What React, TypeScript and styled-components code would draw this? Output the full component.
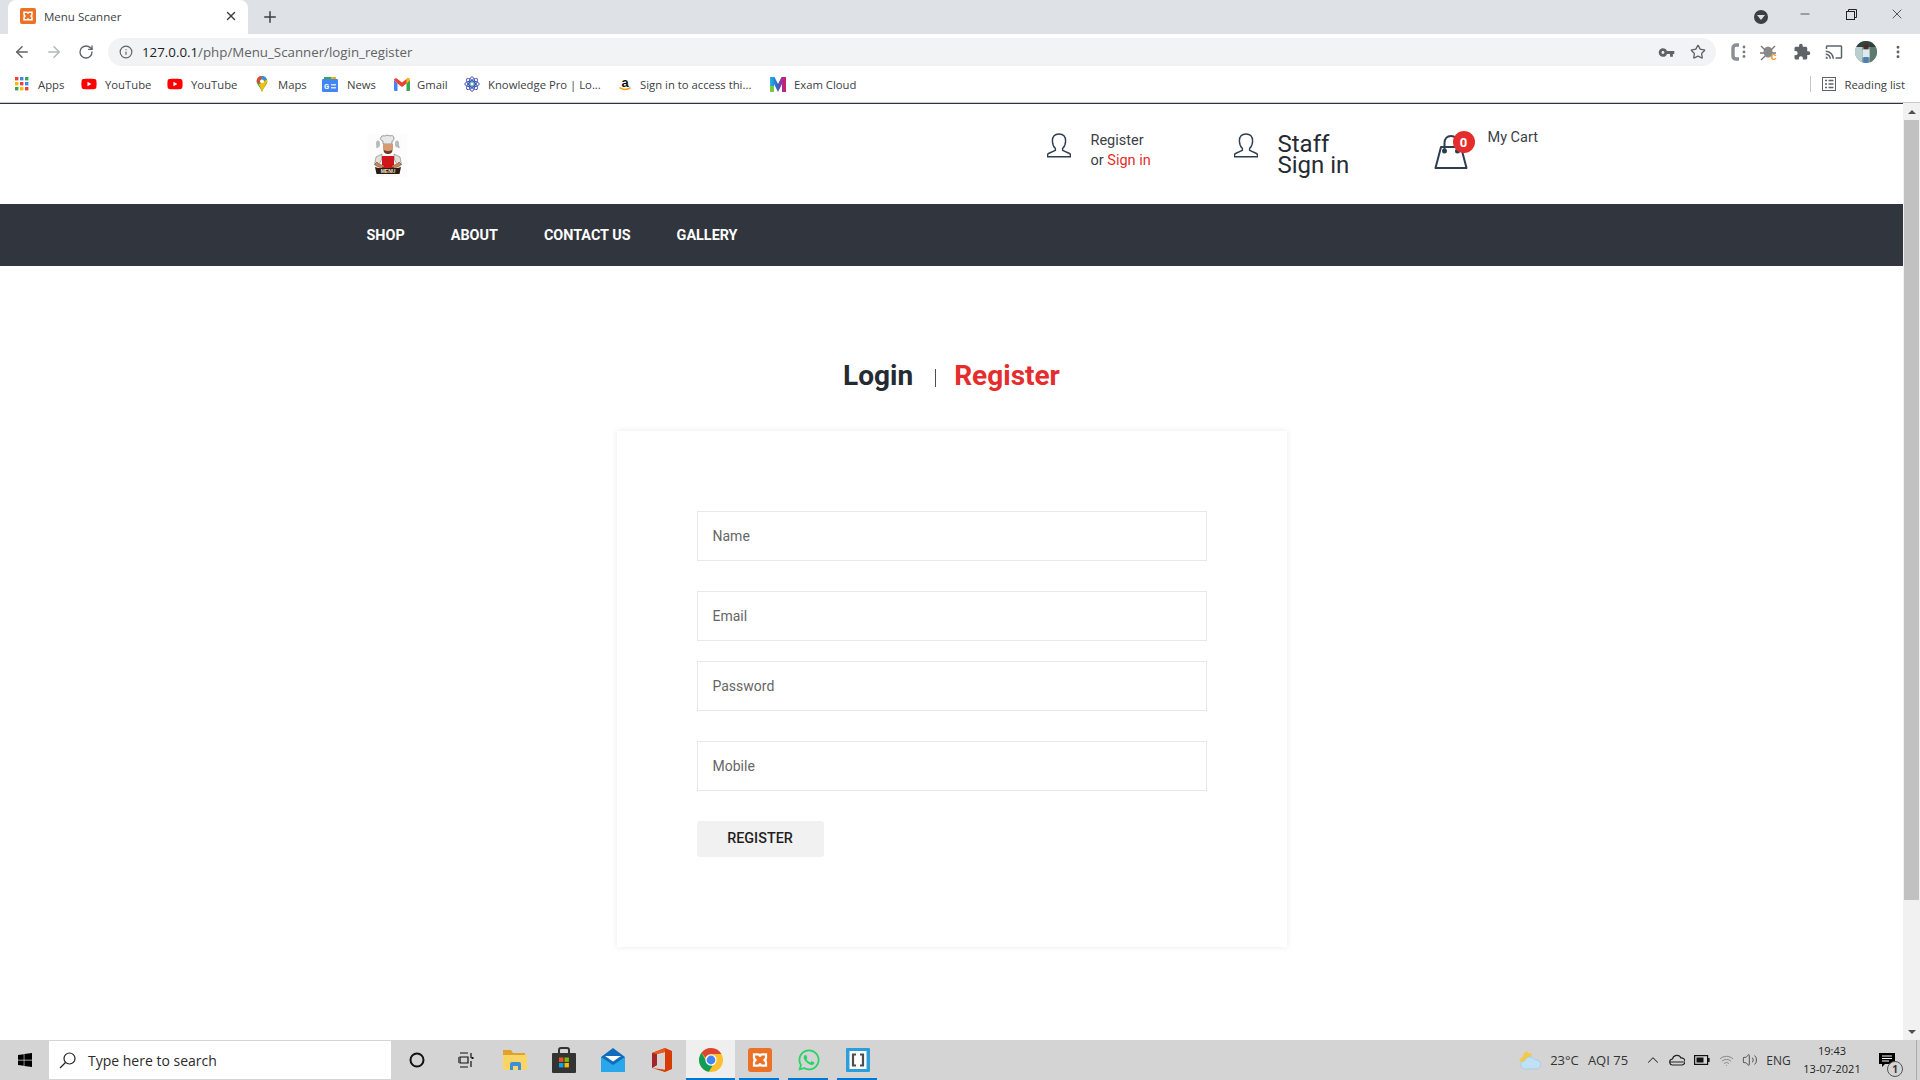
import React from 'react';
import styled, { createGlobalStyle } from 'styled-components';
import { ArrowLeft, ArrowRight, RotateCw, Info, Star, X, Plus, Minus, ChevronUp, Volume2, Wifi, EllipsisVertical } from 'lucide-react';
import { FaWindows, FaWhatsapp, FaYoutube } from 'react-icons/fa';
import { MdExtension, MdVpnKey, MdCast } from 'react-icons/md';

const Global = createGlobalStyle`
  html, body { margin: 0; padding: 0; height: 100%; overflow: hidden; background: #fff; }
  * { box-sizing: border-box; }
  #root { height: 100%; }
`;

const UI = `"Open Sans", "Noto Sans", sans-serif`;
const WEB = `Roboto, "Liberation Sans", sans-serif`;

const Screen = styled.div`display: flex; flex-direction: column; height: 1080px; width: 1920px;`;

/* ---------- browser chrome ---------- */
const Chrome = styled.header`flex: 0 0 103px; display: flex; flex-direction: column; border-bottom: 1px solid #c8cacd; font-family: ${UI}; color: #3c4043;`;
const TabStrip = styled.div`flex: 0 0 34px; display: flex; align-items: center; padding-left: 8px; background: #dee1e6;`;
const Tab = styled.div`width: 240px; height: 34px; display: flex; align-items: center; padding: 0 10px 2px 12px; background: #fff; border-radius: 8px 8px 0 0; font-size: 11.5px;`;
const TabTitle = styled.span`margin-left: 8px; flex: 1;`;
const NewTab = styled.div`margin-left: 13px; display: flex; color: #3c4043;`;
const WindowControls = styled.div`margin-left: auto; display: flex; align-items: center; height: 34px;`;
const Dropdown = styled.div`width: 14px; height: 14px; border-radius: 50%; background: #3c4043; margin-right: 4px; display: flex; align-items: center; justify-content: center;
  &::after { content: ''; border: 4px solid transparent; border-top: 5px solid #dee1e6; border-bottom: 0; }`;
const DropSlot = styled.div`width: 38px; display: flex; justify-content: center;`;
const WinButton = styled.div`width: 46px; height: 28px; align-self: flex-start; display: flex; align-items: center; justify-content: center; color: #222;`;

const Toolbar = styled.div`flex: 0 0 36px; display: flex; align-items: center; padding: 0 6px; background: #fff;`;
const ToolSlot = styled.div<{ $muted?: boolean }>`width: 32px; height: 28px; flex: none; display: flex; align-items: center; justify-content: center; color: ${p => (p.$muted ? '#b4b6b9' : '#5f6368')};`;
const Omnibox = styled.div`flex: 1; height: 28px; margin: 0 6px; padding: 0 2px; border-radius: 14px; background: #f1f3f4; display: flex; align-items: center;`;
const UrlText = styled.span`font-size: 13.3px; color: #5f6368; white-space: nowrap;`;
const UrlHost = styled.span`color: #202124;`;
const OmniSpacer = styled.div`flex: 1;`;
const Avatar = styled.div`width: 22px; height: 22px; border-radius: 50%; overflow: hidden; display: flex;`;

const Bookmarks = styled.div`flex: 0 0 32px; display: flex; align-items: center; padding: 0 0 4px 15px; background: #fff; font-size: 11.3px;`;
const Bookmark = styled.div<{ $w: number }>`width: ${p => p.$w}px; flex: none; display: flex; align-items: center; white-space: nowrap; overflow: hidden;`;
const BmIcon = styled.span<{ $gap: number }>`display: flex; margin-right: ${p => p.$gap}px; flex: none;`;
const Reading = styled.div`margin-left: auto; display: flex; align-items: center; padding-right: 15px; height: 16px; border-left: 1px solid #c4c6c9; padding-left: 11px; gap: 9px; white-space: nowrap;`;

/* ---------- page ---------- */
const Viewport = styled.div`flex: 1; display: flex; min-height: 0;`;
const Page = styled.main`flex: 1; min-width: 0; overflow: hidden; background: #fff; font-family: ${WEB}; color: #262b33; border-top: 1px solid #31353d;`;
const Scrollbar = styled.div`flex: 0 0 17px; background: #f1f1f1; display: flex; flex-direction: column; align-items: center;`;
const Thumb = styled.div`width: 15px; height: 780px; margin: 0 0 auto; background: #c1c1c1;`;
const Arrow = styled.div<{ $up?: boolean }>`height: 17px; flex: none; display: flex; align-items: center; justify-content: center;
  &::after { content: ''; border: 4px solid transparent; ${p => (p.$up ? 'border-bottom: 4px solid #505050; border-top: 0;' : 'border-top: 4px solid #505050; border-bottom: 0;')} }`;

const SiteHeader = styled.div`height: 100px; width: 1170px; margin: 0 auto; display: flex; align-items: flex-start;`;
const Logo = styled.div`width: 40px; margin-top: 30px; flex: none; display: flex;`;
const Account = styled.div<{ $w: number; $ml?: number }>`width: ${p => p.$w}px; margin-left: ${p => p.$ml ?? 0}px; flex: none; display: flex; align-items: flex-start;`;
const UserGlyph = styled.span`display: flex; margin-top: 29px; color: #2c3e50;`;
const AccountText = styled.div`margin: 27px 0 0 20px; font-size: 14.5px; line-height: 20px; color: #3a3f47; white-space: nowrap;`;
const Red = styled.span`color: #e52d2d;`;
const StaffText = styled.div`margin: 30px 0 0 20px; font-size: 24px; line-height: 21px; color: #262b33; white-space: nowrap;`;
const Cart = styled.div`display: flex; align-items: flex-start; position: relative; margin-left: -1px;`;
const CartGlyph = styled.span`display: flex; margin-top: 30px; color: #2c3e50;`;
const CartBadge = styled.span`position: absolute; left: 19px; top: 27px; width: 22px; height: 22px; border-radius: 50%; background: #e52d2d; color: #fff; font-size: 13px; font-weight: 700; display: flex; align-items: center; justify-content: center;`;
const CartLabel = styled.span`margin: 24px 0 0 20px; font-size: 14.5px; line-height: 20px; color: #3a3f47; white-space: nowrap;`;

const NavBar = styled.nav`height: 62px; background: #31353d;`;
const NavList = styled.div`width: 1170px; height: 100%; margin: 0 auto; display: flex; align-items: center; gap: 46px; color: #fff; font-size: 14.4px; font-weight: 700;`;

const Section = styled.section`padding-top: 92px; display: flex; flex-direction: column; align-items: center;`;
const Heading = styled.div`height: 36px; display: flex; align-items: center; font-size: 28px; font-weight: 700; margin-bottom: 37px; line-height: 36px;`;
const Divider = styled.span`width: 1px; height: 18px; margin: 4px 18px 0 22px; background: #4a4d52;`;
const Card = styled.form`width: 670px; padding: 80px 80px 90px; background: #fff; box-shadow: 0 0 6px rgba(0, 0, 0, 0.09); display: flex; flex-direction: column; align-items: flex-start;`;
const Field = styled.input<{ $after: number }>`width: 510px; height: 50px; margin-bottom: ${p => p.$after}px; padding: 0 15px; border: 1px solid #e8e8e8; outline: none; background: #fff; font-family: ${WEB}; font-size: 14px;
  &::placeholder { color: #666; opacity: 1; }`;
const Submit = styled.button`width: 127px; height: 36px; border: 0; border-radius: 3px; background: #f1f1f1; color: #1f1f1f; font-family: ${WEB}; font-size: 14.4px; font-weight: 500; padding: 0 0 2px;`;

/* ---------- taskbar ---------- */
const Taskbar = styled.footer`flex: 0 0 40px; display: flex; align-items: stretch; background: #d4d4d4; font-family: ${UI}; color: #222; position: relative;
  &::after { content: ''; position: absolute; right: 3px; top: 0; bottom: 0; width: 1px; background: #aaa; }`;
const StartSlot = styled.div`width: 49px; display: flex; align-items: center; justify-content: center; color: #000;`;
const SearchBox = styled.div`width: 342px; margin: 1px 0; background: #fff; display: flex; align-items: center; padding-left: 10px; gap: 12px; font-size: 14px; color: #2b2b2b;`;
const AppList = styled.div`display: flex; margin-left: 1px;`;
const AppSlot = styled.div<{ $active?: boolean; $open?: boolean }>`width: 49px; display: flex; align-items: center; justify-content: center; position: relative; background: ${p => (p.$active ? '#efefef' : 'transparent')};
  &::after { content: ''; display: ${p => (p.$active || p.$open ? 'block' : 'none')}; position: absolute; bottom: 0; height: 2px; left: ${p => (p.$active ? 0 : 4)}px; right: ${p => (p.$active ? 0 : 5)}px; background: #0078d4; }`;
const Tray = styled.div`margin-left: auto; display: flex; align-items: center; padding-right: 14px; font-size: 12px;`;
const TraySlot = styled.div<{ $w: number; $ml?: number; $big?: boolean }>`width: ${p => p.$w}px; margin-left: ${p => p.$ml ?? 0}px; flex: none; display: flex; align-items: center; justify-content: center; white-space: nowrap; color: #333; font-size: ${p => (p.$big ? 13 : 12)}px;`;
const Clock = styled.div`width: 72px; display: flex; flex-direction: column; align-items: center; font-size: 11px; line-height: 18px; color: #222;`;
const Notify = styled.div`width: 38px; display: flex; justify-content: center; position: relative;`;
const NotifyBadge = styled.span`position: absolute; left: 19px; top: 8px; width: 16px; height: 16px; border: 1px solid #555; border-radius: 50%; background: #d4d4d4; font-size: 10px; font-weight: 700; display: flex; align-items: center; justify-content: center; color: #333;`;

/* ---------- drawings ---------- */
const Xampp = ({ s = 16 }: { s?: number }) => (
  <svg width={s} height={s} viewBox="0 0 16 16">
    <rect width="16" height="16" rx="2" fill="#ea7125" />
    <path d="M4 4.2h2.6c1 0 1.4.9 1.4 1.6 0-.7.4-1.6 1.4-1.6H12v2.2c0 1-.9 1.6-1.7 1.6.8 0 1.7.6 1.700 1.600v2.200H9.400C8.400 11.800 8 10.900 8 10.200c0 .7-.4 1.600-1.400 1.600H4V9.600C4 8.600 4.900 8 5.700 8 4.900 8 4 7.400 4 6.400z" fill="none" stroke="#fff" strokeWidth="1.500" />
  </svg>
);
const AppsGrid = () => (
  <svg width="14" height="14" viewBox="0 0 14 14">
    {[0, 5, 10].flatMap((y, r) => [0, 5, 10].map((x, c) => (
      <rect key={`${r}${c}`} x={x} y={y} width="3.4" height="3.4" fill={[['#ea4335', '#4285f4', '#34a853'], ['#fbbc05', '#ea4335', '#4285f4'], ['#34a853', '#fbbc05', '#ea4335']][r][c]} />
    )))}
  </svg>
);
const MapsPin = () => (
  <svg width="14" height="16" viewBox="0 0 14 18">
    <path d="M7 0a6 6 0 0 1 6 6c0 4-4 6-6 12C5 12 1 10 1 6a6 6 0 0 1 6-6z" fill="#34a853" />
    <path d="M2 2.2A6 6 0 0 1 7 0L3 9C1.5 7.5 1 7 1 6a6 6 0 0 1 1-3.8z" fill="#ea4335" />
    <path d="M7 0a6 6 0 0 1 5 2.6L7 8z" fill="#4285f4" />
    <path d="M3.4 9.6 12.6 4c.9 2.4-.4 4.4-2 6.4L7 18C6 14 4.8 12 3.4 9.6z" fill="#fbbc05" />
    <circle cx="7" cy="6" r="2.2" fill="#fff" />
  </svg>
);
const NewsIcon = () => (
  <svg width="16" height="16" viewBox="0 0 16 16">
    <path d="M2 1h12v4H2z" fill="#f9ab00" /><path d="M2 1h7v3H2z" fill="#34a853" />
    <rect y="3" width="16" height="13" rx="1" fill="#4285f4" />
    <text x="2" y="12.5" fontSize="7.5" fontWeight="700" fontFamily="Roboto" fill="#fff">G</text>
    <path d="M9 8h5v1.4H9zM9 11h5v1.4H9z" fill="#d2e3fc" />
  </svg>
);
const GmailIcon = () => (
  <svg width="16" height="13" viewBox="0 0 16 13">
    <path d="M0 2v10a1 1 0 0 0 1 1h2.5V5.5z" fill="#4285f4" /><path d="M16 2v10a1 1 0 0 1-1 1h-2.5V5.5z" fill="#34a853" />
    <path d="M0 2C0 .5 1.6-.4 2.8.5L8 4.4l5.2-3.9C14.4-.4 16 .5 16 2l-3.5 3.5L8 9 3.5 5.5z" fill="#ea4335" />
    <path d="M12.5 5.5 16 2c0-1.5-1.6-2.4-2.8-1.5L12.5 1z" fill="#fbbc05" />
  </svg>
);
const KnowledgeIcon = () => (
  <svg width="16" height="16" viewBox="0 0 16 16" fill="none" stroke="#3f51b5" strokeWidth="1">
    {[0, 45, 90, 135].map(a => <ellipse key={a} cx="8" cy="8" rx="3" ry="7.2" transform={`rotate(${a} 8 8)`} />)}
    <circle cx="8" cy="8" r="2" stroke="#2aa7a0" />
  </svg>
);
const AmazonIcon = () => (
  <svg width="16" height="16" viewBox="0 0 16 16">
    <text x="8" y="10.5" textAnchor="middle" fontSize="13" fontWeight="700" fontFamily="Liberation Sans" fill="#111">a</text>
    <path d="M2.5 11.5c3 2.5 8 2.5 11 .2" stroke="#f90" strokeWidth="1.5" fill="none" />
  </svg>
);
const ExamCloud = () => (
  <svg width="16" height="16" viewBox="0 0 16 16">
    <defs><linearGradient id="ec" x1="0" x2="1" y1="0" y2="0"><stop offset="0" stopColor="#2bb0e8" /><stop offset=".45" stopColor="#1e6fc4" /><stop offset=".6" stopColor="#7b3fb5" /><stop offset="1" stopColor="#d81b60" /></linearGradient></defs>
    <path d="M0 1h4.5L8 8l3.5-7H16v15h-4V8l-4 8-4-8v8H0z" fill="url(#ec)" />
    <path d="M0 10h4v6H0z" fill="#7cc644" />
  </svg>
);
const UserOutline = () => (
  <svg width="24" height="25" viewBox="0 0 24 25" fill="none" stroke="currentColor" strokeWidth="1.4">
    <path d="M8.4 15.5c-2-2-3-4.6-3-7.6C5.4 3.6 8 1 12 1s6.600 2.600 6.600 6.900c0 3-1 5.600-3 7.600v1.800l6.900 3.200c.8.400 1 1 1 1.900v1.400H.5v-1.400c0-.9.2-1.500 1-1.900l6.900-3.200z" />
  </svg>
);
const BagOutline = () => (
  <svg width="34" height="35" viewBox="0 0 34 35" fill="none" stroke="currentColor" strokeWidth="2">
    <path d="M7 13h20l5.500 21H1.500z" strokeLinejoin="round" />
    <path d="M10.500 16V9c0-4 2.500-7 6.500-7s6.500 3 6.500 7v7" />
    <circle cx="10.500" cy="17" r="1.500" fill="currentColor" /><circle cx="23.500" cy="17" r="1.500" fill="currentColor" />
  </svg>
);
const ChefLogo = () => (
  <svg width="40" height="43" viewBox="0 0 40 43">
    <rect width="40" height="43" fill="#fcfcfc" />
    <path d="M14 3c1-2 3-1 4-1 1-1 4-1 5 0 2-1 4 0 4 2 0 2-1 3-2 3v3H16V7c-2 0-3-2-2-4z" fill="#e8e8e8" stroke="#777" strokeWidth=".7" />
    <path d="M16 10h10v5c0 3-2 5-5 5s-5-2-5-5z" fill="#d89a75" />
    <path d="M17 16c2 1.500 6 1.500 8 0v2c-2 2.500-6 2.500-8 0z" fill="#6a3a22" />
    <path d="M11 8l-1 6M31 8l1 6" stroke="#888" strokeWidth="1" />
    <ellipse cx="11" cy="10" rx="2" ry="3.400" fill="#b8bcc0" /><ellipse cx="30" cy="10" rx="2" ry="3.400" fill="#b8bcc0" />
    <path d="M15 20l-6 3-1.500 8h4l3-5zM27 20l6 3 1.500 8h-4l-3-5z" fill="#e3e0d9" stroke="#666" strokeWidth=".5" />
    <path d="M15 22h12v12H15z" fill="#d0161b" />
    <path d="M8 30c1 3 5 4 9 3v-2c-3 0-6-.5-7-3zM34 30c-1 3-5 4-9 3v-2c3 0 6-.5 7-3z" fill="#d0875c" stroke="#5a2e18" strokeWidth=".5" />
    <path d="M8 33l3 1h20l3-1-1.500 7H9.500z" fill="#2c1b12" />
    <text x="21" y="38.700" textAnchor="middle" fontFamily="Liberation Sans" fontWeight="700" fontSize="5" fill="#f4e7cf">MENU</text>
  </svg>
);
const BugIcon = () => (
  <svg width="20" height="20" viewBox="0 0 20 20">
    <ellipse cx="8" cy="10" rx="4.500" ry="5.500" fill="#888" />
    <path d="M1 4l4 4M15 4l-4 4M0 11h4M16 11h-4M1 18l4-4" stroke="#777" strokeWidth="1.300" />
    <text x="13.500" y="18" fontFamily="Liberation Sans" fontWeight="700" fontSize="11" textAnchor="middle" fill="#f0952c">c</text>
  </svg>
);
const CIcon = () => (
  <svg width="20" height="20" viewBox="0 0 20 20">
    <path d="M11 3H8.500C6.500 3 5 4 5 6v8c0 2 1.500 3 3.500 3H11" fill="none" stroke="#8b8f93" strokeWidth="3.400" />
    <circle cx="16" cy="5" r="1.400" fill="#7a7e82" /><circle cx="16" cy="10" r="1.400" fill="#7a7e82" /><circle cx="16" cy="14.500" r="1.400" fill="#7a7e82" />
  </svg>
);
const AvatarArt = () => (
  <svg width="22" height="22" viewBox="0 0 22 22">
    <rect width="22" height="22" fill="#7f9c93" /><rect width="22" height="6" fill="#33403c" />
    <rect x="0" y="6" width="7" height="16" fill="#b7cfcf" /><rect x="15" y="6" width="7" height="16" fill="#5c7a6d" />
    <circle cx="11" cy="6" r="2.600" fill="#4a2e25" /><rect x="7.500" y="8.500" width="7" height="8" fill="#dfe8ef" /><rect x="8.500" y="16" width="5" height="6" fill="#4f7fb5" />
  </svg>
);
const ReadingIcon = () => (
  <svg width="14" height="14" viewBox="0 0 14 14" fill="none" stroke="#5f6368">
    <rect x=".5" y=".5" width="13" height="13" /><path d="M3 3.500h2M6.500 3.500h5M3 7h2M6.500 7h5M3 10.500h2M6.500 10.500h5" strokeWidth="1.300" />
  </svg>
);
const FolderIcon = () => (
  <svg width="24" height="22" viewBox="0 0 24 22">
    <path d="M0 1h8l2 3h12v4H0z" fill="#e0a32a" /><path d="M0 6h24v15H0z" fill="#f9d566" />
    <path d="M7 21v-6a2 2 0 0 1 2-2h7a2 2 0 0 1 2 2v6h-3v-4h-5v4z" fill="#3b8fd9" />
  </svg>
);
const StoreIcon = () => (
  <svg width="24" height="26" viewBox="0 0 24 26">
    <path d="M7 7V3a2 2 0 0 1 2-2h6a2 2 0 0 1 2 2v4" fill="none" stroke="#333" strokeWidth="2" />
    <rect y="6" width="24" height="20" rx="1" fill="#333" />
    <rect x="7" y="10.500" width="4.400" height="4.400" fill="#f25022" /><rect x="12.500" y="10.500" width="4.400" height="4.400" fill="#7fba00" />
    <rect x="7" y="16" width="4.400" height="4.400" fill="#00a4ef" /><rect x="12.500" y="16" width="4.400" height="4.400" fill="#ffb900" />
  </svg>
);
const MailIcon = () => (
  <svg width="24" height="24" viewBox="0 0 24 24">
    <path d="M12 0 24 9v15H0V9z" fill="#0f6cbd" />
    <path d="M0 9l12 8 12-8v15H0z" fill="#28a8ea" /><path d="M4 8h16l-8 5.500z" fill="#fff" />
  </svg>
);
const OfficeIcon = () => (
  <svg width="20" height="24" viewBox="0 0 20 24">
    <path d="M13 0 20 3v18l-7 3-13-4 13 1.800V4L5 6v11l-5 3V5z" fill="#d83b01" />
    <path d="M0 5 5 6v11l-5 3z" fill="#a4262c" /><path d="M13 0 0 5l5 1 8-2z" fill="#e8591f" />
  </svg>
);
const ChromeIcon = () => (
  <svg width="24" height="24" viewBox="0 0 24 24">
    <circle cx="12" cy="12" r="12" fill="#fbc02d" />
    <path d="M12 0a12 12 0 0 1 10.400 6H12a6 6 0 0 0-5.600 3.800L2.500 4.700A12 12 0 0 1 12 0z" fill="#db4437" />
    <path d="M2.500 4.700 7 12.400a6 6 0 0 0 6.500 5.400L9.800 23.800A12 12 0 0 1 2.500 4.700z" fill="#0f9d58" />
    <circle cx="12" cy="12" r="5.600" fill="#fff" /><circle cx="12" cy="12" r="4.400" fill="#4285f4" />
  </svg>
);
const BracketsIcon = () => (
  <svg width="24" height="24" viewBox="0 0 24 24">
    <rect width="24" height="24" rx="1" fill="#2a9fdb" /><rect x="3.500" y="3" width="17" height="18" fill="#fff" />
    <path d="M10 6.500H7v11h3M14 6.500h3v11h-3" fill="none" stroke="#4d4d4d" strokeWidth="2.200" />
  </svg>
);
const TaskView = () => (
  <svg width="16" height="16" viewBox="0 0 16 16" fill="none" stroke="#111" strokeWidth="1.200">
    <path d="M2 1h8M2 15h8M2 5h8v6H2zM0 5v6M13 1v5M13 9v6" /><path d="M14.500 5v2" stroke="#111" strokeWidth="2" />
  </svg>
);
const SearchGlass = () => (
  <svg width="17" height="17" viewBox="0 0 17 17" fill="none" stroke="#222" strokeWidth="1.200">
    <circle cx="10.500" cy="6.500" r="5.500" /><path d="M6.500 10.500 1 16" />
  </svg>
);
const WeatherIcon = () => (
  <svg width="24" height="20" viewBox="0 0 24 20">
    <path d="M9 1l1.500 2.500L13 3l.5 3-4 2-1 4H3L1 9l3.500-1.500L6 3z" fill="#f6c945" />
    <path d="M7 19a4 4 0 0 1-.5-8 6 6 0 0 1 11-1 4.500 4.500 0 0 1 1.500 9z" fill="#bfe0f5" stroke="#8fc1e3" strokeWidth=".5" />
  </svg>
);
const OneDrive = () => (
  <svg width="16" height="12" viewBox="0 0 16 12"><path d="M4 11a3 3 0 0 1-.5-6 4.500 4.500 0 0 1 8.500-1 3.500 3.500 0 0 1 1 7z" fill="none" stroke="#222" strokeWidth="1.200" /><path d="M.8 8h14" stroke="#222" /></svg>
);
const Battery = () => (
  <svg width="16" height="10" viewBox="0 0 16 10"><rect x=".6" y=".6" width="13" height="8.800" fill="none" stroke="#111" strokeWidth="1.200" /><rect x="2.500" y="2.500" width="7" height="5" fill="#111" /><rect x="14" y="3" width="1.600" height="4" fill="#111" /></svg>
);
const ActionCenter = () => (
  <svg width="16" height="15" viewBox="0 0 16 15"><path d="M0 0h16v11H6l-3 3v-3H0z" fill="#000" /><path d="M3 3h10M3 5.500h10M3 8h7" stroke="#fff" /></svg>
);

const bookmarks: { w: number; gap: number; icon: React.ReactNode; label: string }[] = [
  { w: 66, gap: 9, icon: <AppsGrid />, label: 'Apps' },
  { w: 86, gap: 8, icon: <FaYoutube size={16} color="#f00" />, label: 'YouTube' },
  { w: 88, gap: 8, icon: <FaYoutube size={16} color="#f00" />, label: 'YouTube' },
  { w: 67, gap: 9, icon: <MapsPin />, label: 'Maps' },
  { w: 72, gap: 9, icon: <NewsIcon />, label: 'News' },
  { w: 70, gap: 7, icon: <GmailIcon />, label: 'Gmail' },
  { w: 153, gap: 8, icon: <KnowledgeIcon />, label: 'Knowledge Pro | Lo...' },
  { w: 153, gap: 7, icon: <AmazonIcon />, label: 'Sign in to access thi...' },
  { w: 90, gap: 8, icon: <ExamCloud />, label: 'Exam Cloud' },
];

export default function App() {
  return (
    <Screen>
      <Global />
      <Chrome>
        <TabStrip>
          <Tab>
            <Xampp />
            <TabTitle>Menu Scanner</TabTitle>
            <X size={14} strokeWidth={2.4} />
          </Tab>
          <NewTab><Plus size={18} strokeWidth={2} /></NewTab>
          <WindowControls>
            <DropSlot><Dropdown /></DropSlot>
            <WinButton><Minus size={14} strokeWidth={1.2} /></WinButton>
            <WinButton>
              <svg width="11" height="11" viewBox="0 0 11 11" fill="none" stroke="#222"><rect x=".5" y="2.500" width="8" height="8" /><path d="M2.500 2.500v-2h8v8h-2" /></svg>
            </WinButton>
            <WinButton><X size={16} strokeWidth={1.1} /></WinButton>
          </WindowControls>
        </TabStrip>
        <Toolbar>
          <ToolSlot><ArrowLeft size={18} strokeWidth={2} /></ToolSlot>
          <ToolSlot $muted><ArrowRight size={18} strokeWidth={2} /></ToolSlot>
          <ToolSlot><RotateCw size={16} strokeWidth={2} /></ToolSlot>
          <Omnibox>
            <ToolSlot><Info size={14} strokeWidth={2} /></ToolSlot>
            <UrlText><UrlHost>127.0.0.1</UrlHost>/php/Menu_Scanner/login_register</UrlText>
            <OmniSpacer />
            <ToolSlot><MdVpnKey size={17} /></ToolSlot>
            <ToolSlot><Star size={16} strokeWidth={2} /></ToolSlot>
          </Omnibox>
          <ToolSlot><CIcon /></ToolSlot>
          <ToolSlot><BugIcon /></ToolSlot>
          <ToolSlot><MdExtension size={18} /></ToolSlot>
          <ToolSlot><MdCast size={18} /></ToolSlot>
          <ToolSlot><Avatar><AvatarArt /></Avatar></ToolSlot>
          <ToolSlot><EllipsisVertical size={16} strokeWidth={2.4} /></ToolSlot>
        </Toolbar>
        <Bookmarks>
          {bookmarks.map((b, i) => (
            <Bookmark key={i} $w={b.w}><BmIcon $gap={b.gap}>{b.icon}</BmIcon>{b.label}</Bookmark>
          ))}
          <Reading><ReadingIcon />Reading list</Reading>
        </Bookmarks>
      </Chrome>

      <Viewport>
        <Page>
          <SiteHeader>
            <Logo><ChefLogo /></Logo>
            <Account $w={187} $ml={640}>
              <UserGlyph><UserOutline /></UserGlyph>
              <AccountText>Register<br />or <Red>Sign in</Red></AccountText>
            </Account>
            <Account $w={201}>
              <UserGlyph><UserOutline /></UserGlyph>
              <StaffText>Staff<br />Sign in</StaffText>
            </Account>
            <Cart>
              <CartGlyph><BagOutline /></CartGlyph>
              <CartBadge>0</CartBadge>
              <CartLabel>My Cart</CartLabel>
            </Cart>
          </SiteHeader>
          <NavBar>
            <NavList>
              <span>SHOP</span><span>ABOUT</span><span>CONTACT US</span><span>GALLERY</span>
            </NavList>
          </NavBar>
          <Section>
            <Heading>
              <span>Login</span><Divider /><Red>Register</Red>
            </Heading>
            <Card>
              <Field $after={30} placeholder="Name" />
              <Field $after={20} placeholder="Email" />
              <Field $after={30} placeholder="Password" type="password" />
              <Field $after={30} placeholder="Mobile" />
              <Submit type="button">REGISTER</Submit>
            </Card>
          </Section>
        </Page>
        <Scrollbar>
          <Arrow $up />
          <Thumb />
          <Arrow />
        </Scrollbar>
      </Viewport>

      <Taskbar>
        <StartSlot><FaWindows size={16} /></StartSlot>
        <SearchBox><SearchGlass />Type here to search</SearchBox>
        <AppList>
          <AppSlot>
            <svg width="16" height="16" viewBox="0 0 16 16"><circle cx="8" cy="8" r="6.500" fill="none" stroke="#111" strokeWidth="2" /></svg>
          </AppSlot>
          <AppSlot><TaskView /></AppSlot>
          <AppSlot><FolderIcon /></AppSlot>
          <AppSlot><StoreIcon /></AppSlot>
          <AppSlot><MailIcon /></AppSlot>
          <AppSlot><OfficeIcon /></AppSlot>
          <AppSlot $active><ChromeIcon /></AppSlot>
          <AppSlot $open><Xampp s={24} /></AppSlot>
          <AppSlot $open><FaWhatsapp size={24} color="#25d366" /></AppSlot>
          <AppSlot $open><BracketsIcon /></AppSlot>
        </AppList>
        <Tray>
          <TraySlot $w={32}><WeatherIcon /></TraySlot>
          <TraySlot $w={37} $big>23°C</TraySlot>
          <TraySlot $w={50} $big>AQI 75</TraySlot>
          <TraySlot $w={24} $ml={8}><ChevronUp size={18} strokeWidth={1.4} /></TraySlot>
          <TraySlot $w={24}><OneDrive /></TraySlot>
          <TraySlot $w={25}><Battery /></TraySlot>
          <TraySlot $w={24}><Wifi size={15} strokeWidth={1.3} color="#777" /></TraySlot>
          <TraySlot $w={23}><Volume2 size={16} strokeWidth={1.2} /></TraySlot>
          <TraySlot $w={35}>ENG</TraySlot>
          <Clock><span>19:43</span><span>13-07-2021</span></Clock>
          <Notify><ActionCenter /><NotifyBadge>1</NotifyBadge></Notify>
        </Tray>
      </Taskbar>
    </Screen>
  );
}
